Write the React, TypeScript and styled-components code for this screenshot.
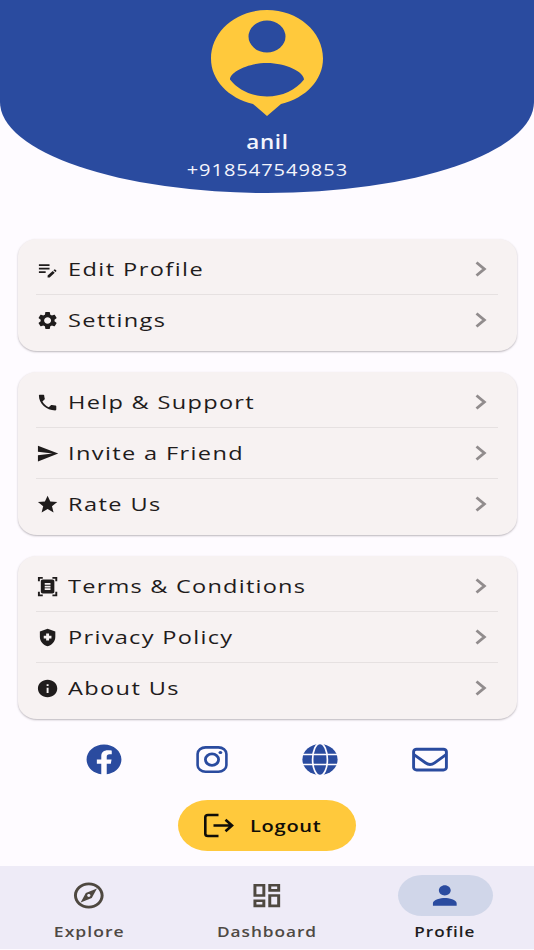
import React from "react";
import type { ReactNode } from "react";
import styled, { createGlobalStyle } from "styled-components";
import {
  MdEditNote,
  MdSettings,
  MdPhone,
  MdSend,
  MdStar,
  MdDocumentScanner,
  MdHealthAndSafety,
  MdInfo,
  MdOutlineExplore,
  MdOutlineDashboard,
  MdPerson,
} from "react-icons/md";
import { FaFacebook } from "react-icons/fa";

const GlobalStyle = createGlobalStyle`
  *, *::before, *::after { box-sizing: border-box; }
  body {
    margin: 0;
    background: #fefbff;
    font-family: "Open Sans", "Noto Sans", sans-serif;
    color: #1f1c1c;
  }
`;

const Screen = styled.div`
  display: flex;
  flex-direction: column;
  width: 534px;
  height: 950px;
  overflow: hidden;
  background: #fefbff;
`;

const Header = styled.header`
  flex: none;
  display: flex;
  flex-direction: column;
  align-items: center;
  height: 193px;
  padding-top: 10px;
  background: #2a4b9f;
  color: #f4f5fc;
  border-radius: 0 0 50% 50% / 0 0 91px 91px;
`;

const Avatar = styled.svg`
  display: block;
  width: 112px;
  height: 106px;
`;

/* Wide lettering: $scale widens the glyphs, $track adjusts the tracking. */
const Wide = styled.span<{ $scale?: number; $track?: number; $center?: boolean }>`
  display: inline-block;
  white-space: nowrap;
  letter-spacing: ${(p) => p.$track ?? 0.5}px;
  transform: scaleX(${(p) => p.$scale ?? 1.15});
  transform-origin: ${(p) => (p.$center ? "center" : "left")} center;
`;

const Name = styled.div`
  margin-top: 12px;
  font-size: 19.5px;
  line-height: 28px;
  font-weight: 600;
`;

const Phone = styled.div`
  font-size: 17px;
  line-height: 28px;
`;

const Menu = styled.main`
  display: flex;
  flex-direction: column;
  gap: 21px;
  padding: 46px 17.5px 0;
`;

const Card = styled.section`
  padding: 5px 18.5px;
  background: #f7f2f2;
  border-radius: 19px / 17px;
  box-shadow: 0 1px 2px rgba(60, 50, 60, 0.34);
`;

const Row = styled.div`
  display: flex;
  align-items: center;
  height: 51px;
  padding-bottom: 1px;
  font-size: 19px;
  line-height: 28px;
  & + & {
    box-shadow: 0 -1px 0 #e6e1e1;
  }
`;

const RowIcon = styled.span`
  display: flex;
  flex: none;
  width: 32px;
  margin: 1px 0 0 -0.5px;
  svg {
    width: 23.2px;
    height: 21px;
  }
`;

const Chevron = styled.svg`
  flex: none;
  width: 12px;
  height: 16px;
  margin: 0 11px 0 auto;
`;

const Socials = styled.div`
  display: flex;
  justify-content: space-between;
  align-items: center;
  height: 36px;
  margin: 22px 86px 0;
  color: #2a4b9f;
  svg {
    width: 36px;
    height: 31px;
  }
`;

const LogoutButton = styled.button`
  display: flex;
  flex: none;
  align-items: center;
  align-self: center;
  width: 178px;
  height: 51px;
  margin-top: 23px;
  padding: 0 0 0 25px;
  border: 0;
  border-radius: 30px / 26px;
  background: #ffc93c;
  color: #0f0d08;
  font: 550 17px/28px "Open Sans", sans-serif;
  svg {
    width: 31px;
    height: 25px;
    margin-right: 16px;
  }
`;

const NavBar = styled.nav`
  display: grid;
  grid-template-columns: repeat(3, 1fr);
  flex: none;
  height: 83px;
  margin: auto 0 1px;
  padding-top: 9px;
  background: #eeebf7;
`;

const NavItem = styled.div<{ $active?: boolean }>`
  display: flex;
  flex-direction: column;
  align-items: center;
  color: ${(p) => (p.$active ? "#1e1c20" : "#4e4944")};
  font-size: 14.5px;
  line-height: 22px;
  font-weight: 550;
`;

const NavPill = styled.span<{ $active?: boolean }>`
  display: flex;
  align-items: center;
  justify-content: center;
  width: 95px;
  height: 41px;
  margin-bottom: 5px;
  border-radius: 24px / 20.5px;
  background: ${(p) => (p.$active ? "#d0d6e9" : "transparent")};
  color: ${(p) => (p.$active ? "#2a4b9f" : "#4e4840")};
  svg {
    width: 35.6px;
    height: 31px;
  }
`;

type Item = { icon: ReactNode; label: string; track: number };

const stretch = { preserveAspectRatio: "none" };

const groups: Item[][] = [
  [
    { icon: <MdEditNote {...stretch} />, label: "Edit Profile", track: 1.15 },
    { icon: <MdSettings {...stretch} />, label: "Settings", track: 1.1 },
  ],
  [
    { icon: <MdPhone {...stretch} />, label: "Help & Support", track: 1.05 },
    { icon: <MdSend {...stretch} />, label: "Invite a Friend", track: 1.1 },
    { icon: <MdStar {...stretch} />, label: "Rate Us", track: 1.15 },
  ],
  [
    { icon: <MdDocumentScanner {...stretch} />, label: "Terms & Conditions", track: 0.98 },
    { icon: <MdHealthAndSafety {...stretch} />, label: "Privacy Policy", track: 1.05 },
    { icon: <MdInfo {...stretch} />, label: "About Us", track: 1.1 },
  ],
];

const Instagram = () => (
  <svg viewBox="0 0 36 31" fill="none" stroke="currentColor">
    <rect x="2.6" y="3.4" width="28.8" height="24.4" rx="8" ry="6.6" strokeWidth="2.6" />
    <ellipse cx="17" cy="15.6" rx="6.6" ry="5.7" strokeWidth="2.8" />
    <ellipse cx="25.4" cy="8.5" rx="1.9" ry="1.6" fill="currentColor" stroke="none" />
  </svg>
);

const Globe = () => (
  <svg viewBox="0 0 36 31">
    <ellipse cx="17" cy="15.5" rx="17.6" ry="15.5" fill="currentColor" />
    <g fill="none" stroke="#fefbff" strokeWidth="1.7">
      <ellipse cx="17" cy="15.5" rx="7.4" ry="16.2" />
      <path d="M-1 10.5h37M-1 20.5h37" />
    </g>
  </svg>
);

const GlobeSlot = styled.span`
  display: flex;
  svg {
    overflow: visible;
  }
`;

const Envelope = () => (
  <svg viewBox="0 0 36 31" fill="none" stroke="currentColor" strokeWidth="2.9">
    <rect x="1.6" y="5.2" width="32.8" height="20.8" rx="3" ry="2.6" />
    <path d="M2 10.6 13.4 18.8q4.6 3.4 9.2 0L34 10.6" />
  </svg>
);

export default function App() {
  return (
    <Screen>
      <GlobalStyle />
      <Header>
        <Avatar viewBox="0 0 112 106">
          <path
            fill="#ffc93c"
            fillRule="evenodd"
            d="M56 0C25 0 0 21.5 0 48.5C0 70 17 88 42 94L56 106L70 94C95 88 112 70 112 48.5C112 21.5 87 0 56 0ZM56 10.5a18.5 16 0 1 1 0 32a18.5 16 0 1 1 0-32ZM56 53C37 53 19 62 19 69.5C27 80 41 86.5 56 86.5C71 86.5 85 80 93 69.5C93 62 75 53 56 53Z"
          />
        </Avatar>
        <Name>
          <Wide $center $track={0.6}>anil</Wide>
        </Name>
        <Phone>
          <Wide $center $scale={1.18} $track={0.8}>+918547549853</Wide>
        </Phone>
      </Header>
      <Menu>
        {groups.map((items) => (
          <Card key={items[0].label}>
            {items.map((item) => (
              <Row key={item.label}>
                <RowIcon>{item.icon}</RowIcon>
                <Wide $scale={1.24} $track={item.track}>{item.label}</Wide>
                <Chevron viewBox="0 0 12 16" fill="none" stroke="#918c8d" strokeWidth="2.9">
                  <path d="M1.5 1.5 9.3 8 1.5 14.5" />
                </Chevron>
              </Row>
            ))}
          </Card>
        ))}
      </Menu>
      <Socials>
        <FaFacebook {...stretch} />
        <Instagram />
        <GlobeSlot>
          <Globe />
        </GlobeSlot>
        <Envelope />
      </Socials>
      <LogoutButton>
        <svg viewBox="0 0 31 25" fill="none" stroke="currentColor" strokeWidth="2.6">
          <path d="M15.5 2H5Q2.3 2 2.3 4.3V20.7Q2.3 23 5 23H15.5M10.5 12.5H29M22.500 6.8 29 12.5 22.500 18.2" />
        </svg>
        <Wide $scale={1.18} $track={0.6}>Logout</Wide>
      </LogoutButton>
      <NavBar>
        <NavItem>
          <NavPill><MdOutlineExplore {...stretch} /></NavPill>
          <Wide $center $scale={1.21} $track={0.85}>Explore</Wide>
        </NavItem>
        <NavItem>
          <NavPill><MdOutlineDashboard {...stretch} /></NavPill>
          <Wide $center $scale={1.19} $track={0.8}>Dashboard</Wide>
        </NavItem>
        <NavItem $active>
          <NavPill $active><MdPerson {...stretch} /></NavPill>
          <Wide $center $scale={1.18} $track={0.85}>Profile</Wide>
        </NavItem>
      </NavBar>
    </Screen>
  );
}
